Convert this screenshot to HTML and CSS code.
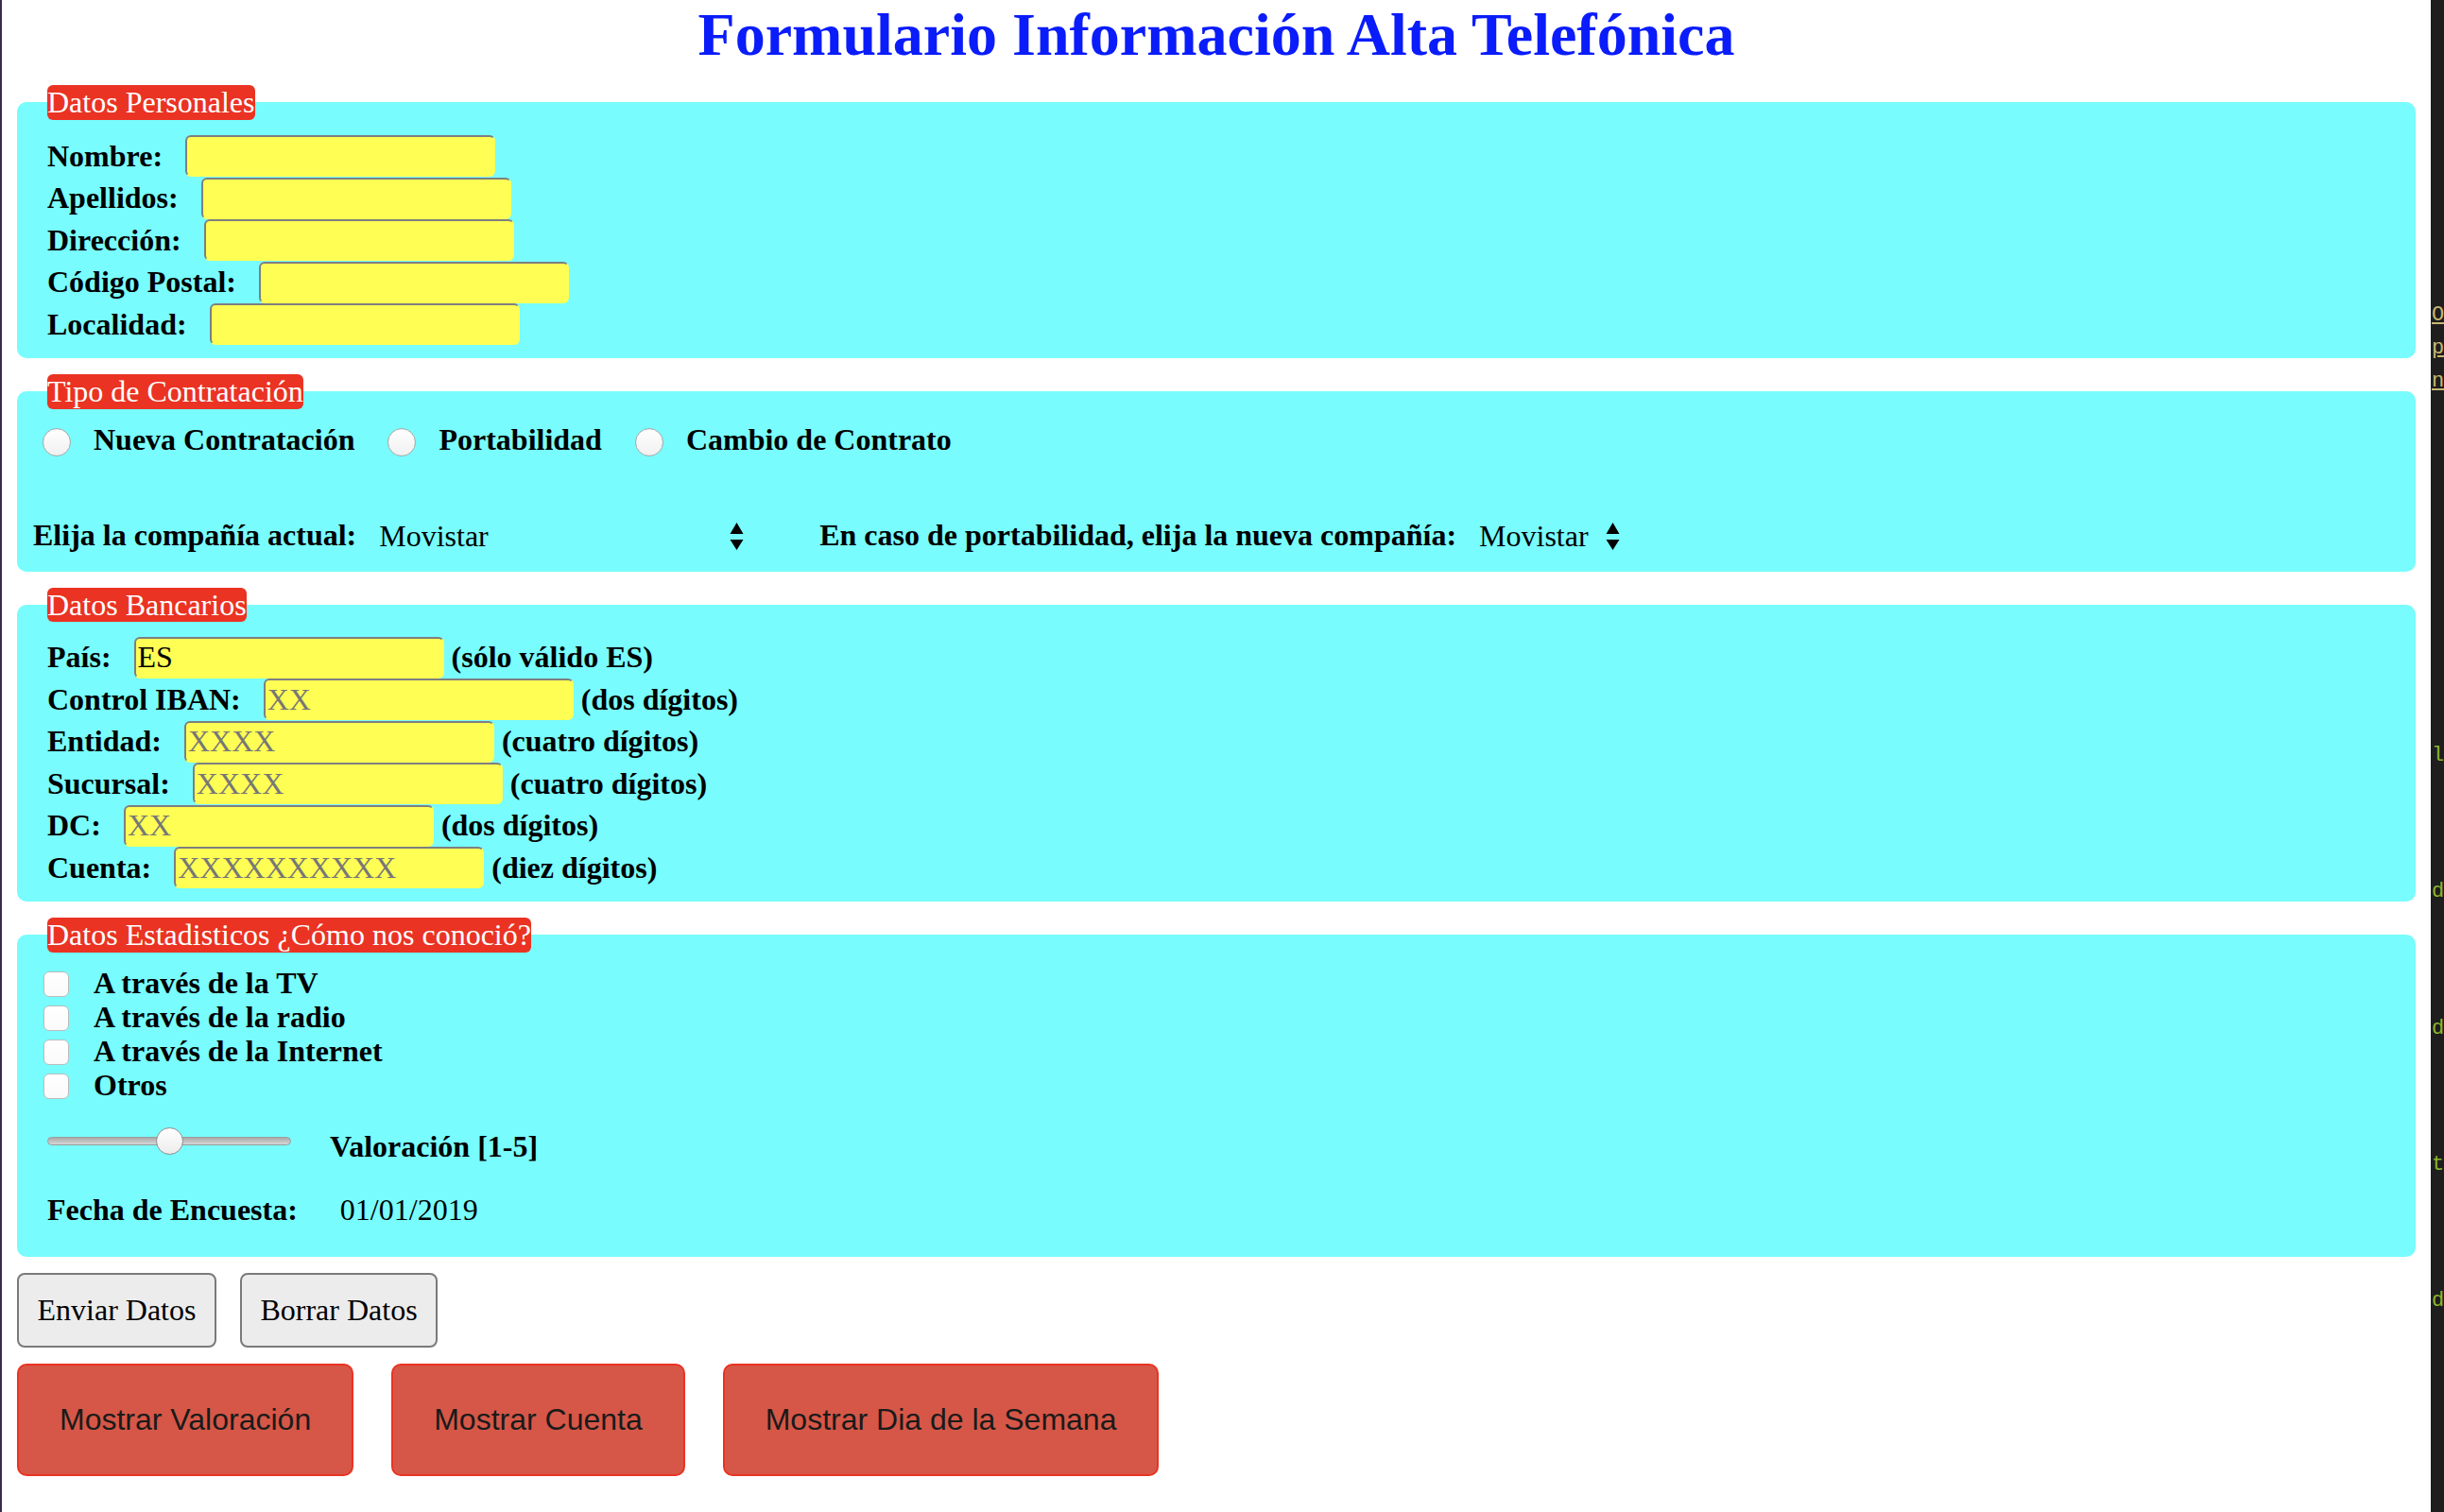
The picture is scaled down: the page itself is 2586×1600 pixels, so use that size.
FILE: index.html
```html
<!DOCTYPE html>
<html lang="es">
<head>
<meta charset="utf-8">
<title>Formulario Información Alta Telefónica</title>
<link rel="stylesheet" href="styles.css">
</head>
<body>
<div class="screen">
  <main class="page">
    <h1 class="title">Formulario Información Alta Telefónica</h1>
    <form class="form">
      <fieldset class="box">
        <legend class="tag">Datos Personales</legend>
        <div class="rows rows-personal">
          <div class="row"><label class="lbl" for="nombre">Nombre:</label><input class="field" id="nombre" type="text"></div>
          <div class="row"><label class="lbl" for="apellidos">Apellidos:</label><input class="field" id="apellidos" type="text"></div>
          <div class="row"><label class="lbl" for="direccion">Dirección:</label><input class="field" id="direccion" type="text"></div>
          <div class="row"><label class="lbl" for="cp">Código Postal:</label><input class="field" id="cp" type="text"></div>
          <div class="row"><label class="lbl" for="localidad">Localidad:</label><input class="field" id="localidad" type="text"></div>
        </div>
      </fieldset>

      <fieldset class="box">
        <legend class="tag">Tipo de Contratación</legend>
        <div class="radios">
          <label class="opt"><input type="radio" name="tipo" value="nueva">Nueva Contratación</label>
          <label class="opt"><input type="radio" name="tipo" value="porta">Portabilidad</label>
          <label class="opt"><input type="radio" name="tipo" value="cambio">Cambio de Contrato</label>
        </div>
        <div class="selects">
          <label class="lbl" for="actual">Elija la compañía actual:</label>
          <span class="sel sel-1">
            <select id="actual">
              <option>Movistar</option>
              <option>Vodafone</option>
              <option>Orange</option>
              <option>Yoigo</option>
            </select>
            <svg class="arrows" viewBox="0 0 15 30" aria-hidden="true"><path d="M0.5 12 L7.5 0 L14.5 12 Z M0.5 18 L14.5 18 L7.5 29 Z" fill="#000"/></svg>
          </span>
          <label class="lbl" for="nueva">En caso de portabilidad, elija la nueva compañía:</label>
          <span class="sel sel-2">
            <select id="nueva">
              <option>Movistar</option>
              <option>Vodafone</option>
              <option>Orange</option>
              <option>Yoigo</option>
            </select>
            <svg class="arrows" viewBox="0 0 15 30" aria-hidden="true"><path d="M0.5 12 L7.5 0 L14.5 12 Z M0.5 18 L14.5 18 L7.5 29 Z" fill="#000"/></svg>
          </span>
        </div>
      </fieldset>

      <fieldset class="box">
        <legend class="tag">Datos Bancarios</legend>
        <div class="rows rows-bank">
          <div class="row"><label class="lbl" for="pais">País:</label><input class="field" id="pais" type="text" value="ES"><span class="hint">(sólo válido ES)</span></div>
          <div class="row"><label class="lbl" for="iban">Control IBAN:</label><input class="field" id="iban" type="text" placeholder="XX"><span class="hint">(dos dígitos)</span></div>
          <div class="row"><label class="lbl" for="entidad">Entidad:</label><input class="field" id="entidad" type="text" placeholder="XXXX"><span class="hint">(cuatro dígitos)</span></div>
          <div class="row"><label class="lbl" for="sucursal">Sucursal:</label><input class="field" id="sucursal" type="text" placeholder="XXXX"><span class="hint">(cuatro dígitos)</span></div>
          <div class="row"><label class="lbl" for="dc">DC:</label><input class="field" id="dc" type="text" placeholder="XX"><span class="hint">(dos dígitos)</span></div>
          <div class="row"><label class="lbl" for="cuenta">Cuenta:</label><input class="field" id="cuenta" type="text" placeholder="XXXXXXXXXX"><span class="hint">(diez dígitos)</span></div>
        </div>
      </fieldset>

      <fieldset class="box">
        <legend class="tag">Datos Estadisticos ¿Cómo nos conoció?</legend>
        <div class="checks">
          <label class="check"><input type="checkbox">A través de la TV</label>
          <label class="check"><input type="checkbox">A través de la radio</label>
          <label class="check"><input type="checkbox">A través de la Internet</label>
          <label class="check"><input type="checkbox">Otros</label>
        </div>
        <div class="rating">
          <input class="slider" id="valoracion" type="range" min="1" max="5" value="3">
          <label class="lbl" for="valoracion">Valoración [1-5]</label>
        </div>
        <div class="date-row">
          <span class="lbl date-lbl">Fecha de Encuesta:</span>
          <span class="date-value">01/01/2019</span>
        </div>
      </fieldset>

      <div class="actions">
        <button class="btn" type="submit">Enviar Datos</button>
        <button class="btn" type="reset">Borrar Datos</button>
      </div>
    </form>

    <div class="tools">
      <button class="btn-red" type="button">Mostrar Valoración</button>
      <button class="btn-red" type="button">Mostrar Cuenta</button>
      <button class="btn-red" type="button">Mostrar Dia de la Semana</button>
    </div>
  </main>

  <aside class="strip" aria-hidden="true">
    <span class="frag frag-link f1">Or</span>
    <span class="frag frag-link f2">pr</span>
    <span class="frag frag-link f3">nt</span>
    <span class="frag frag-code f4">le</span>
    <span class="frag frag-code f5">d</span>
    <span class="frag frag-code f6">d</span>
    <span class="frag frag-code f7">t</span>
    <span class="frag frag-code f8">d</span>
  </aside>
</div>
</body>
</html>
```

FILE: styles.css
```css
html, body {
  margin: 0;
  padding: 0;
  background: #ffffff;
}

body {
  font-family: "Liberation Serif", "Times New Roman", serif;
  font-size: 32px;
  color: #000;
}

.screen {
  display: flex;
  width: 2586px;
  height: 1600px;
  overflow: hidden;
}

.page {
  flex: 0 0 2572px;
  box-sizing: border-box;
  border-left: 2px solid #3b2b4f;
  padding: 0 16px;
  background: #fff;
}

.title {
  margin: 0 0 16px;
  font-size: 64px;
  line-height: 74px;
  font-weight: bold;
  text-align: center;
  color: #0a1cfa;
}

.form {
  margin: 0;
}

.box {
  margin: 0 0 17px;
  padding: 0 16px;
  border: 0;
  border-radius: 10px;
  background: #78fcfd;
  min-width: 0;
}

.tag {
  margin-left: 16px;
  padding: 0;
  background: #ea3323;
  color: #fff;
  border-radius: 6px;
  font-size: 32px;
  line-height: 36.8px;
}

.lbl {
  font-weight: bold;
  white-space: nowrap;
}

/* text rows */
.rows {
  padding-left: 16px;
}

.rows-personal {
  padding-top: 16px;
  padding-bottom: 13.5px;
}

.rows-bank {
  padding-top: 15px;
  padding-bottom: 13.7px;
}

.row {
  display: flex;
  align-items: center;
  height: 44.5px;
}

.row .lbl {
  margin-right: 24px;
}

.field {
  box-sizing: border-box;
  width: 328px;
  height: 44px;
  margin: 0;
  padding: 2px 2px;
  border: 2px solid;
  border-color: #7f7f7f transparent transparent #7f7f7f;
  border-radius: 6px;
  background: #fffe54;
  font-family: "Liberation Serif", "Times New Roman", serif;
  font-size: 32px;
  color: #000;
  outline: none;
}

.field::placeholder {
  color: #777;
}

.hint {
  margin-left: 8px;
  font-weight: bold;
}

/* radios */
.radios {
  display: flex;
  align-items: center;
  height: 36.8px;
  margin: 14px 0 0 11px;
}

.opt {
  display: flex;
  align-items: center;
  margin-right: 35px;
  font-weight: bold;
  white-space: nowrap;
}

.opt input {
  appearance: none;
  -webkit-appearance: none;
  box-sizing: border-box;
  width: 30px;
  height: 30px;
  margin: 6px 24px 0 0;
  border-radius: 50%;
  border: 1.5px solid #a9a9a9;
  background: linear-gradient(#ffffff, #f1f1f1);
  box-shadow: inset 0 1px 1px rgba(0, 0, 0, 0.05);
}

/* selects */
.selects {
  display: flex;
  align-items: center;
  height: 36.8px;
  margin: 65px 0 19.4px 1px;
}

.selects .lbl {
  margin-right: 24px;
}

.sel {
  position: relative;
  display: inline-block;
  height: 37px;
}

.sel-1 {
  width: 386px;
  margin-right: 80px;
}

.sel-2 {
  width: 149px;
}

.sel select {
  appearance: none;
  -webkit-appearance: none;
  width: 100%;
  height: 100%;
  margin: 0;
  padding: 0;
  border: 0;
  background: transparent;
  font-family: "Liberation Serif", "Times New Roman", serif;
  font-size: 32px;
  color: #000;
  outline: none;
}

.arrows {
  position: absolute;
  right: 0;
  top: 5px;
  width: 15px;
  height: 30px;
  pointer-events: none;
}

/* checkboxes */
.checks {
  margin: 14.5px 0 0 12px;
}

.check {
  display: flex;
  align-items: center;
  height: 36px;
  font-weight: bold;
  white-space: nowrap;
}

.check input {
  appearance: none;
  -webkit-appearance: none;
  box-sizing: border-box;
  width: 27px;
  height: 27px;
  margin: 3px 26px 0 0;
  border: 1.5px solid #bcbcbc;
  border-radius: 6px;
  background: linear-gradient(#ffffff, #fafafa);
}

/* slider */
.rating {
  display: flex;
  align-items: center;
  height: 36.8px;
  margin: 28.5px 0 0 16px;
}

.slider {
  appearance: none;
  -webkit-appearance: none;
  width: 258px;
  height: 30px;
  margin: 0 41px 12px 0;
  padding: 0;
  background: transparent;
}

.slider::-webkit-slider-runnable-track {
  box-sizing: border-box;
  height: 9px;
  border-radius: 5px;
  border: 1px solid #9c9c9c;
  background: linear-gradient(#a9a9a9, #d6d6d6);
}

.slider::-webkit-slider-thumb {
  -webkit-appearance: none;
  appearance: none;
  box-sizing: border-box;
  width: 29px;
  height: 29px;
  margin-top: -11px;
  border-radius: 50%;
  border: 1.5px solid #8e8e8e;
  background: linear-gradient(#ffffff, #ececec);
}

/* date */
.date-row {
  display: flex;
  align-items: center;
  height: 36.8px;
  margin: 30px 0 31.4px 16px;
}

.date-lbl {
  margin-right: 45px;
}

.date-value {
  font-weight: normal;
}

/* buttons */
.actions {
  display: flex;
  gap: 25px;
}

.btn {
  margin: 0;
  padding: 19px 19.5px;
  border: 2px solid #7a7a7a;
  border-radius: 8px;
  background: #ececec;
  color: #000;
  font-family: "Liberation Serif", "Times New Roman", serif;
  font-size: 32px;
  line-height: 36.8px;
}

.tools {
  display: flex;
  gap: 40px;
  margin-top: 17px;
}

.btn-red {
  margin: 0;
  padding: 39.5px 43px;
  border: 2px solid #ea3323;
  border-radius: 10px;
  background: #d65747;
  color: #1a1a1a;
  font-family: "Liberation Sans", Arial, sans-serif;
  font-size: 32px;
  line-height: 36.8px;
}

/* editor window showing at the right edge */
.strip {
  position: relative;
  flex: 1 1 auto;
  background: #1e1e1e;
  overflow: hidden;
}

.frag {
  position: absolute;
  left: 1px;
  font-family: "Liberation Mono", monospace;
  font-size: 22px;
  line-height: 24px;
  white-space: nowrap;
}

.frag-link {
  color: #c8b671;
  text-decoration: underline;
}

.frag-code {
  color: #8db42c;
}

.f1 { top: 322px; }
.f2 { top: 357px; }
.f3 { top: 392px; }
.f4 { top: 788px; }
.f5 { top: 932px; }
.f6 { top: 1077px; }
.f7 { top: 1221px; }
.f8 { top: 1365px; }
```
